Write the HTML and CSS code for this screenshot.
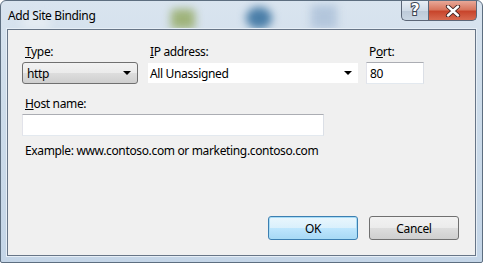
FILE: index.html
```html
<!DOCTYPE html>
<html>
<head>
<meta charset="utf-8">
<link rel="stylesheet" href="styles.css">
</head>
<body>
<div class="window">
  <div class="blur">
    <span class="blob b1"></span>
    <span class="blob b2"></span>
    <span class="blob b3"></span>
    <span class="blob b4"></span>
  </div>
  <div class="titlebar">
    <span class="title">Add Site Binding</span>
    <div class="caption">
      <span class="cbtn help"><span class="q">?</span></span>
      <span class="cbtn close">
        <svg width="18" height="12" viewBox="0 0 18 12">
          <path d="M4 1.5 L14 10.5 M14 1.5 L4 10.5" stroke="#3a2020" stroke-width="4.2" stroke-linecap="round"/>
          <path d="M4 1.5 L14 10.5 M14 1.5 L4 10.5" stroke="#ffffff" stroke-width="2.4" stroke-linecap="round"/>
        </svg>
      </span>
    </div>
  </div>
  <div class="client">
    <div class="row">
      <div class="field f-type">
        <label class="lbl"><u>T</u>ype:</label>
        <div class="select"><span>http</span><span class="arrow"></span></div>
      </div>
      <div class="field f-ip">
        <label class="lbl"><u>I</u>P address:</label>
        <div class="combo"><span>All Unassigned</span><span class="arrow"></span></div>
      </div>
      <div class="field f-port">
        <label class="lbl">P<u>o</u>rt:</label>
        <div class="input"><span>80</span></div>
      </div>
    </div>
    <div class="field f-host">
      <label class="lbl"><u>H</u>ost name:</label>
      <div class="input host"></div>
    </div>
    <div class="example">Example: www.contoso.com or marketing.contoso.com</div>
    <div class="buttons">
      <button class="btn ok">OK</button>
      <button class="btn">Cancel</button>
    </div>
  </div>
</div>
</body>
</html>
```
FILE: styles.css
```css
html, body {
  margin: 0;
  padding: 0;
  background: #ffffff;
}
body {
  font-family: "Noto Sans", "Open Sans", sans-serif;
  font-size: 12px;
  letter-spacing: -0.35px;
  color: #000;
}
.window {
  position: relative;
  width: 481px;
  height: 261px;
  border: 1px solid #5d6e80;
  border-radius: 6px 6px 2px 2px;
  background: linear-gradient(180deg, #d9e4ef 0%, #cddcea 40%, #c4d5e7 100%);
  display: flex;
  flex-direction: column;
  overflow: hidden;
}
.blur {
  position: absolute;
  left: 0; top: 0; right: 0; height: 28px;
  overflow: hidden;
  filter: blur(4px);
}
.blob {
  position: absolute;
  display: block;
  border-radius: 50%;
}
.b1 { left: 170px; top: 8px; width: 24px; height: 22px; background: #9fb37a; border-radius: 4px; }
.b2 { left: 245px; top: 6px; width: 26px; height: 22px; background: #4a7ea8; }
.b3 { left: 310px; top: 4px; width: 26px; height: 26px; background: #b3c6dc; border-radius: 3px; }
.b4 { left: 20px; top: 14px; width: 30px; height: 16px; background: #e5ecf3; }
.titlebar {
  position: relative;
  height: 28px;
  display: flex;
  align-items: flex-start;
}
.title {
  font-size: 12px;
  margin: 6px 0 0 7px;
  color: #000;
}
.caption {
  margin-left: auto;
  margin-right: 5px;
  display: flex;
  height: 20px;
}
.cbtn {
  display: flex;
  align-items: center;
  justify-content: center;
  height: 19px;
  border: 1px solid #5b6677;
  border-top: none;
}
.help {
  width: 26px;
  border-radius: 0 0 0 5px;
  border-right: none;
  background: linear-gradient(180deg, #e8eef5 0%, #d0dbe7 50%, #bcc9d8 51%, #c9d6e3 100%);
}
.q {
  color: #fff;
  font-family: "DejaVu Sans", sans-serif;
  font-weight: bold;
  font-size: 15px;
  line-height: 15px;
  letter-spacing: 0;
  -webkit-text-stroke: 2px #3b4452;
  paint-order: stroke fill;
}
.close {
  width: 47px;
  border-radius: 0 0 5px 0;
  background: linear-gradient(180deg, #e8a898 0%, #d8765e 45%, #c8452c 55%, #d86a50 100%);
}
.client {
  position: relative;
  margin: 0 6px 6px 6px;
  flex: 1;
  background: #f0f0f0;
  border: 1px solid #677587;
  box-shadow: 0 0 0 1px #e6eef6;
  padding: 14px 16px 0 14px;
  display: flex;
  flex-direction: column;
}
.row {
  display: flex;
}
.field {
  display: flex;
  flex-direction: column;
}
.lbl {
  line-height: 16px;
  padding-left: 3px;
  margin-bottom: 2px;
}
.f-type { width: 116px; }
.f-ip { width: 212px; margin-left: 9px; }
.f-port { width: 58px; margin-left: 7px; }
.select {
  height: 22px;
  box-sizing: border-box;
  border: 1px solid #707070;
  border-radius: 3px;
  background: linear-gradient(180deg, #f2f2f2 0%, #ebebeb 50%, #dddddd 51%, #cfcfcf 100%);
  display: flex;
  align-items: center;
  padding: 0 0 0 4px;
}
.combo, .input {
  height: 22px;
  box-sizing: border-box;
  border: 1px solid #abadb3;
  border-color: #abadb3 #dbdfe6 #e3e9ef #e2e3ea;
  background: #fff;
  display: flex;
  align-items: center;
  padding: 0 0 0 3px;
}
.combo { border: 1px solid #f0f0f0; padding-left: 2px; }
.select span:first-child, .combo span:first-child { flex: 1; }
.arrow {
  width: 0; height: 0;
  border-left: 4px solid transparent;
  border-right: 4px solid transparent;
  border-top: 4px solid #000;
  margin-right: 6px;
}
.f-host { margin-top: 12px; width: 302px; }
.host { width: 302px; }
.example {
  margin-top: 7px;
  padding-left: 3px;
  line-height: 16px;
}
.buttons {
  margin-top: auto;
  margin-bottom: 15px;
  display: flex;
  justify-content: flex-end;
  gap: 11px;
}
.btn {
  width: 90px;
  height: 24px;
  box-sizing: border-box;
  font-family: "Noto Sans", sans-serif;
  font-size: 12px;
  letter-spacing: -0.35px;
  border: 1px solid #707070;
  border-radius: 3px;
  background: linear-gradient(180deg, #f2f2f2 0%, #ebebeb 50%, #dddddd 51%, #cfcfcf 100%);
  color: #000;
  padding: 0;
}
.ok {
  border-color: #3c7fb1;
  box-shadow: inset 0 0 0 1px #a8dcf6;
  background: linear-gradient(180deg, #eaf6fd 0%, #d9f0fc 50%, #bee6fd 51%, #a7d9f5 100%);
}
```
